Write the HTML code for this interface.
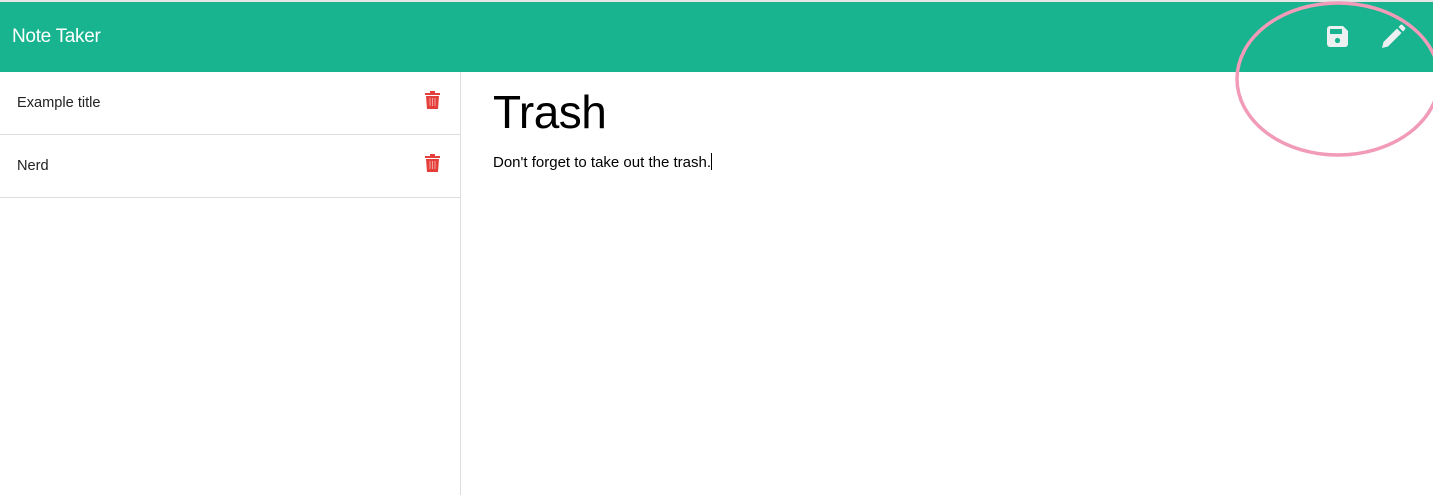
<!DOCTYPE html>
<html><head><meta charset="utf-8"><style>
*{margin:0;padding:0;box-sizing:border-box}
body{width:1433px;height:495px;overflow:hidden;background:#fff;font-family:"Liberation Sans",sans-serif;position:relative}
.top{position:absolute;left:0;top:0;width:1433px;height:2px;background:#e6e6e6}
.hdr{position:absolute;left:0;top:2px;width:1433px;height:70px;background:#18b48f}
.hdr .t{position:absolute;left:12px;top:24px;color:#fff;font-size:19px;letter-spacing:-0.3px}
.side{position:absolute;left:0;top:72px;width:461px;height:423px;border-right:1px solid #ddd}
.item{height:63px;border-bottom:1px solid #ddd;position:relative;font-size:14.6px;color:#222}
.item span{position:absolute;left:17px;top:23px}
.item svg{position:absolute;left:425px;top:19px}
h1{position:absolute;left:493px;top:85px;font-weight:normal;font-size:46px;color:#000;letter-spacing:-0.5px}
.txt{position:absolute;left:493px;top:153px;font-size:15px;color:#000}
.cur{display:inline-block;width:1px;height:17px;background:#000;vertical-align:-3px}
</style></head><body>
<div class="top"></div>
<div class="hdr"><div class="t">Note Taker</div>
<svg style="position:absolute;left:1327px;top:24px" width="21" height="21" viewBox="0 0 21 21"><path d="M3 0h13l5 5v13a3 3 0 0 1-3 3H3a3 3 0 0 1-3-3V3a3 3 0 0 1 3-3z" fill="#ecf0f1"/><rect x="3" y="3" width="12" height="5" fill="#18b48f"/><circle cx="10.5" cy="14.5" r="2.6" fill="#18b48f"/></svg>
<svg style="position:absolute;left:1381px;top:22px" width="25" height="25" viewBox="0 0 25 25"><path d="M1 24l1.5-6L16 4.5l4.5 4.5L7 22.5z" fill="#ecf0f1"/><path d="M17.5 3l2-2a1.5 1.5 0 0 1 2 0l2.5 2.5a1.5 1.5 0 0 1 0 2l-2 2z" fill="#ecf0f1"/></svg>
</div>
<div class="side">
<div class="item"><span>Example title</span><svg width="15" height="18" viewBox="0 0 15 18"><rect x="0" y="2" width="15" height="2" fill="#e43f3a"/><rect x="5" y="0" width="5" height="3" fill="#e43f3a"/><path d="M1 5h13l-1 13H2z" fill="#e43f3a"/><rect x="4.5" y="7" width="1" height="8" fill="#f4a09c"/><rect x="7" y="7" width="1" height="8" fill="#f4a09c"/><rect x="9.5" y="7" width="1" height="8" fill="#f4a09c"/></svg></div>
<div class="item"><span>Nerd</span><svg width="15" height="18" viewBox="0 0 15 18"><rect x="0" y="2" width="15" height="2" fill="#e43f3a"/><rect x="5" y="0" width="5" height="3" fill="#e43f3a"/><path d="M1 5h13l-1 13H2z" fill="#e43f3a"/><rect x="4.5" y="7" width="1" height="8" fill="#f4a09c"/><rect x="7" y="7" width="1" height="8" fill="#f4a09c"/><rect x="9.5" y="7" width="1" height="8" fill="#f4a09c"/></svg></div>
</div>
<h1>Trash</h1>
<div class="txt">Don't forget to take out the trash.<span class="cur"></span></div>
<svg style="position:absolute;left:0;top:0" width="1433" height="495"><ellipse cx="1338" cy="79" rx="101" ry="76" fill="none" stroke="#f29bb9" stroke-width="3.5"/></svg>
</body></html>
